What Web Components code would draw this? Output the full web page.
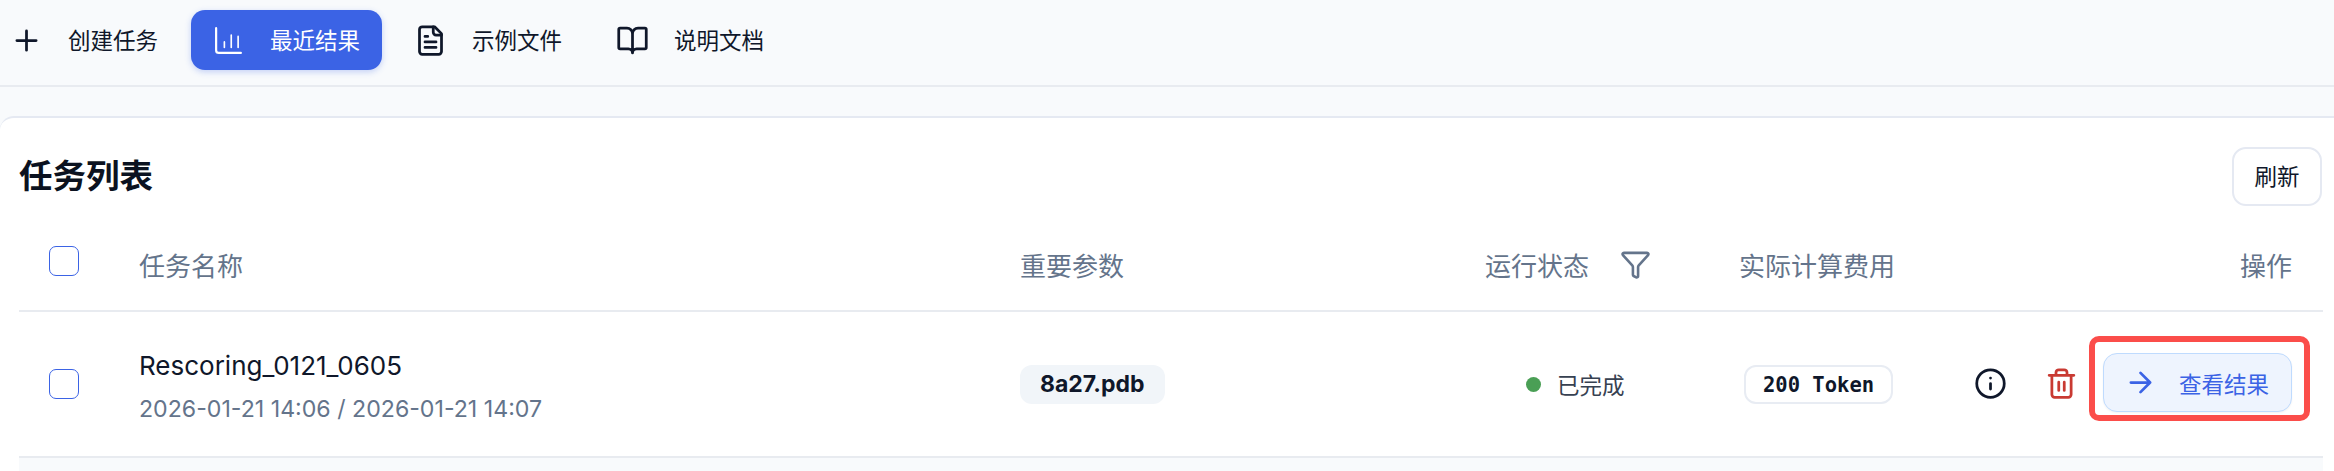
<!DOCTYPE html>
<html lang="zh">
<head>
<meta charset="utf-8">
<title>任务列表</title>
<style>
  html, body { margin: 0; height: 100%; background: #f8fafc; }
  body { font-family: Inter, "Noto Sans CJK SC", sans-serif; color: #0f172a; overflow: hidden; }
</style>
</head>
<body>
<app-nav></app-nav>
<task-panel heading="任务列表">
  <task-head></task-head>
  <task-row name="Rescoring_0121_0605" time="2026-01-21 14:06 / 2026-01-21 14:07" param="8a27.pdb" status="已完成" cost="200 Token"></task-row>
  <task-rest></task-rest>
</task-panel>

<script>
const icons = {
  plus: '<path d="M12 5v14M5 12h14"/>',
  chart: '<path d="M3 3v16a2 2 0 0 0 2 2h16" stroke-width="1.6"/><path d="M9 17v-4M14 17V8M19 17v-8" stroke-width="1.2"/>',
  file: '<path d="M15 2H6a2 2 0 0 0-2 2v16a2 2 0 0 0 2 2h12a2 2 0 0 0 2-2V7z"/><path d="M14 2v4a2 2 0 0 0 2 2h4M8 9h2M8 13h8M8 17h8"/>',
  book: '<path d="M12 7v14M3 18a1 1 0 0 1-1-1V4a1 1 0 0 1 1-1h5a4 4 0 0 1 4 4 4 4 0 0 1 4-4h5a1 1 0 0 1 1 1v13a1 1 0 0 1-1 1h-6a3 3 0 0 0-3 3 3 3 0 0 0-3-3z"/>',
  filter: '<path d="M10 20a1 1 0 0 0 .553.895l2 1A1 1 0 0 0 14 21v-7a2 2 0 0 1 .517-1.341L21.74 4.67A1 1 0 0 0 21 3H3a1 1 0 0 0-.742 1.67l7.225 7.989A2 2 0 0 1 10 14z"/>',
  info: '<circle cx="12" cy="12" r="10"/><path d="M12 16v-4M12 8h.01"/>',
  trash: '<path d="M3 6h18M19 6v14a2 2 0 0 1-2 2H7a2 2 0 0 1-2-2V6M8 6V4a2 2 0 0 1 2-2h4a2 2 0 0 1 2 2v2M10 11v6M14 11v6"/>',
  arrow: '<path d="M5 12h14M12 5l7 7-7 7"/>'
};

class UiIcon extends HTMLElement {
  connectedCallback() {
    const size = this.getAttribute('size') || '33';
    this.attachShadow({ mode: 'open' }).innerHTML = `
      <style>:host { display: inline-flex; flex: none; } svg { display: block; }</style>
      <svg width="${size}" height="${size}" viewBox="0 0 24 24" fill="none" stroke="currentColor" stroke-width="2" stroke-linecap="round" stroke-linejoin="round">${icons[this.getAttribute('name')]}</svg>`;
  }
}
customElements.define('ui-icon', UiIcon);

class NavItem extends HTMLElement {
  connectedCallback() {
    this.attachShadow({ mode: 'open' }).innerHTML = `
      <style>
        :host { display: flex; align-items: center; gap: 25px; height: 60px; padding: 0 22px 0 21px; border-radius: 14px; font-size: 22.5px; color: #0f172a; }
        :host([active]) { background: #3b63e5; color: #fff; box-shadow: 0 2px 6px rgba(59, 99, 229, .28); }
        span { display: block; margin-bottom: 3px; }
      </style>
      <ui-icon name="${this.getAttribute('icon')}"></ui-icon>
      <span><slot></slot></span>`;
  }
}
customElements.define('nav-item', NavItem);

class AppNav extends HTMLElement {
  connectedCallback() {
    this.attachShadow({ mode: 'open' }).innerHTML = `
      <style>
        :host { display: flex; align-items: flex-start; gap: 11px; height: 75px; padding: 10px 0 0 11px; margin-left: -22px; border-bottom: 2px solid #e8ebf0; }
      </style>
      <nav-item icon="plus">创建任务</nav-item>
      <nav-item icon="chart" active>最近结果</nav-item>
      <nav-item icon="file">示例文件</nav-item>
      <nav-item icon="book">说明文档</nav-item>`;
  }
}
customElements.define('app-nav', AppNav);

class TaskPanel extends HTMLElement {
  connectedCallback() {
    this.attachShadow({ mode: 'open' }).innerHTML = `
      <style>
        :host { display: block; margin-top: 29px; height: 355px; box-sizing: border-box; background: #fff; border-top: 2px solid #e5e9f2; border-radius: 14px 0 0 0; padding: 29px 11px 0 19px; }
        header { display: flex; justify-content: space-between; align-items: center; height: 59px; }
        h1 { margin: 0 0 7px; font-size: 33.5px; font-weight: 700; color: #0b1220; }
        button { width: 90px; height: 59px; margin-right: 1px; padding: 0 0 3px; background: #fff; border: 2px solid #e5e9f2; border-radius: 14px; font: inherit; font-size: 22.5px; color: #0f172a; }
      </style>
      <header><h1>${this.getAttribute('heading')}</h1><button>刷新</button></header>
      <slot></slot>`;
  }
}
customElements.define('task-panel', TaskPanel);

const columns = 'grid-template-columns: 120px 881px 465px 254px 1fr;';

class TaskHead extends HTMLElement {
  connectedCallback() {
    this.attachShadow({ mode: 'open' }).innerHTML = `
      <style>
        :host { display: grid; ${columns} align-items: center; height: 106px; box-sizing: border-box; padding-top: 12px; border-bottom: 2px solid #e8ebf0; font-size: 26px; color: #64748b; }
        .box { display: block; width: 30px; height: 30px; box-sizing: border-box; margin: -7px 0 0 30px; border: 1.5px solid #3b63e5; border-radius: 7px; }
        .status { display: flex; align-items: center; gap: 31px; }
        .ops { display: flex; justify-content: space-between; padding-right: 31px; }
      </style>
      <span class="box"></span>
      <span>任务名称</span>
      <span>重要参数</span>
      <span class="status">运行状态 <ui-icon name="filter" size="31"></ui-icon></span>
      <span class="ops"><span>实际计算费用</span><span>操作</span></span>`;
  }
}
customElements.define('task-head', TaskHead);

class TaskRow extends HTMLElement {
  connectedCallback() {
    const a = n => this.getAttribute(n);
    this.attachShadow({ mode: 'open' }).innerHTML = `
      <style>
        :host { display: grid; ${columns} align-items: center; height: 146px; box-sizing: border-box; border-bottom: 2px solid #e8ebf0; }
        .box { display: block; width: 30px; height: 30px; box-sizing: border-box; margin-left: 30px; border: 1.5px solid #3b63e5; border-radius: 7px; }
        .text { padding-top: 3px; }
        .name { font-size: 26px; color: #0f172a; line-height: 36px; margin-bottom: 10px; }
        .time { font-size: 23.15px; color: #64748b; line-height: 30px; }
        .param { display: inline-block; padding: 0 20px; height: 39px; line-height: 39px; border-radius: 12px; background: #f1f5f9; font-size: 23px; font-weight: 700; }
        .status { display: flex; align-items: center; gap: 16px; padding-left: 41px; font-size: 22.5px; color: #374151; }
        .dot { width: 15px; height: 15px; border-radius: 50%; background: #4a9f55; }
        .last { display: flex; align-items: center; }
        .cost { padding: 0 17px; height: 39px; line-height: 37px; box-sizing: border-box; margin-left: 5px; border: 2px solid #e8ecf3; border-radius: 12px; font-family: "DejaVu Sans Mono", monospace; font-weight: 700; font-size: 20.5px; }
        .info { margin-left: 81px; margin-bottom: 2px; color: #0f172a; }
        .trash { margin-left: 38px; margin-bottom: 2px; color: #c93a32; }
        .view { position: relative; display: flex; align-items: center; gap: 22px; width: 189px; height: 59px; box-sizing: border-box; margin: 0 0 3px 25px; padding: 0 0 0 20px; border: 1.5px solid #bfdbfe; border-radius: 14px; background: #eef4fe; color: #3b63e5; font-size: 22.5px; box-shadow: 0 1px 2px rgba(15, 23, 42, .05); }
        .mark { position: absolute; inset: -18px -19px -10px -15px; border: 6px solid #fb4d4a; border-radius: 10px; }
      </style>
      <span class="box"></span>
      <div class="text"><div class="name">${a('name')}</div><div class="time">${a('time')}</div></div>
      <div><span class="param">${a('param')}</span></div>
      <div class="status"><span class="dot"></span>${a('status')}</div>
      <div class="last">
        <span class="cost">${a('cost')}</span>
        <ui-icon class="info" name="info"></ui-icon>
        <ui-icon class="trash" name="trash"></ui-icon>
        <div class="view"><ui-icon name="arrow"></ui-icon>查看结果<span class="mark"></span></div>
      </div>`;
  }
}
customElements.define('task-row', TaskRow);

class TaskRest extends HTMLElement {
  connectedCallback() {
    this.attachShadow({ mode: 'open' }).innerHTML = `
      <style>:host { display: block; height: 20px; background: #f8fafc; }</style>`;
  }
}
customElements.define('task-rest', TaskRest);
</script>
</body>
</html>
